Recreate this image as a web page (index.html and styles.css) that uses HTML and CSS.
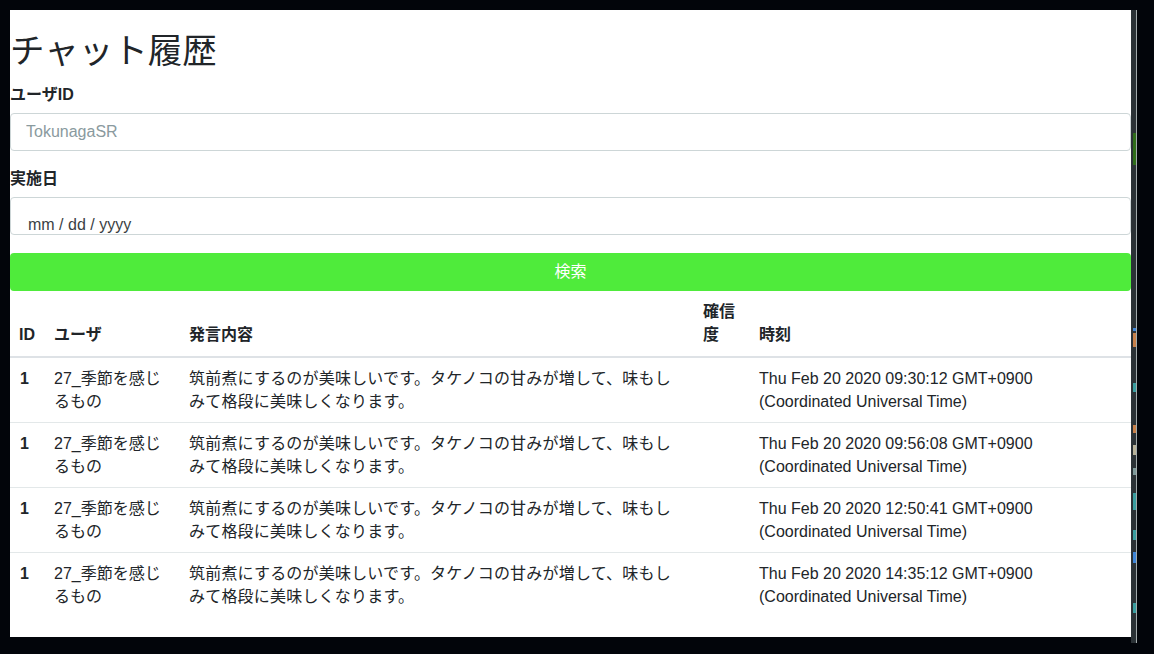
FILE: index.html
```html
<!DOCTYPE html>
<html lang="ja">
<head>
<meta charset="utf-8">
<title>チャット履歴</title>
<link rel="stylesheet" href="styles.css">
</head>
<body>
<div class="screen">
  <main class="page">
    <h1 class="title">チャット履歴</h1>
    <div class="field">
      <label class="label" for="uid">ユーザID</label>
      <input id="uid" class="input" type="text" placeholder="TokunagaSR">
    </div>
    <div class="field field-last">
      <label class="label">実施日</label>
      <div class="input date">mm / dd / yyyy</div>
    </div>
    <button class="search" type="button">検索</button>
    <table class="history">
      <colgroup>
        <col class="c-id"><col class="c-user"><col class="c-msg"><col class="c-conf"><col class="c-time">
      </colgroup>
      <thead>
        <tr><th>ID</th><th>ユーザ</th><th>発言内容</th><th>確信度</th><th>時刻</th></tr>
      </thead>
      <tbody>
        <tr><td class="id">1</td><td>27_季節を感じるもの</td><td class="msg">筑前煮にするのが美味しいです。タケノコの甘みが増して、味もしみて格段に美味しくなります。</td><td></td><td>Thu Feb 20 2020 09:30:12 GMT+0900 (Coordinated Universal Time)</td></tr>
        <tr><td class="id">1</td><td>27_季節を感じるもの</td><td class="msg">筑前煮にするのが美味しいです。タケノコの甘みが増して、味もしみて格段に美味しくなります。</td><td></td><td>Thu Feb 20 2020 09:56:08 GMT+0900 (Coordinated Universal Time)</td></tr>
        <tr><td class="id">1</td><td>27_季節を感じるもの</td><td class="msg">筑前煮にするのが美味しいです。タケノコの甘みが増して、味もしみて格段に美味しくなります。</td><td></td><td>Thu Feb 20 2020 12:50:41 GMT+0900 (Coordinated Universal Time)</td></tr>
        <tr><td class="id">1</td><td>27_季節を感じるもの</td><td class="msg">筑前煮にするのが美味しいです。タケノコの甘みが増して、味もしみて格段に美味しくなります。</td><td></td><td>Thu Feb 20 2020 14:35:12 GMT+0900 (Coordinated Universal Time)</td></tr>
      </tbody>
    </table>
  </main>
  <div class="strip">
    <span class="mark m-green"></span>
    <span class="mark m-blue m2"></span>
    <span class="mark m-orange m3"></span>
    <span class="mark m-teal m4"></span>
    <span class="mark m-orange m5"></span>
    <span class="mark m-beige m6"></span>
    <span class="mark m-gray m7"></span>
    <span class="mark m-teal m8"></span>
    <span class="mark m-teal m9"></span>
    <span class="mark m-blue m10"></span>
    <span class="mark m-teal m11"></span>
  </div>
</div>
</body>
</html>
```

FILE: styles.css
```css
html, body {
  margin: 0;
  padding: 0;
  background: #02050a;
}

.screen {
  display: flex;
  align-items: flex-start;
  box-sizing: border-box;
  height: 654px;
  padding: 10px 0 0 10px;
  font-family: "Liberation Sans", "Noto Sans CJK JP", sans-serif;
  color: #212529;
}

.page {
  width: 1121px;
  height: 627px;
  background: #ffffff;
  overflow: hidden;
}

.title {
  margin: 20px 0 10.5px;
  font-size: 34.5px;
  line-height: 42px;
  font-weight: 400;
  color: #212529;
}

.field {
  display: flex;
  flex-direction: column;
  margin-bottom: 16px;
}

.field-last {
  margin-bottom: 18.5px;
}

.label {
  font-size: 16px;
  line-height: 24px;
  font-weight: 700;
  margin-bottom: 6px;
}

.input {
  box-sizing: border-box;
  width: 100%;
  height: 38px;
  margin: 0;
  border: 1px solid #cdd6d7;
  border-radius: 4px;
  padding: 0 15px;
  font-family: inherit;
  font-size: 16px;
  color: #495057;
  background: #fff;
  outline: none;
}

.input::placeholder {
  color: #8a9a9e;
}

.date {
  padding: 15.5px 0 0 17px;
  line-height: 24px;
  color: #3a3f44;
  overflow: hidden;
  white-space: nowrap;
}

.search {
  display: block;
  box-sizing: border-box;
  width: 100%;
  height: 38px;
  margin: 0;
  border: none;
  border-radius: 4px;
  background: #4feb3b;
  color: #ffffff;
  font-family: inherit;
  font-size: 16px;
  line-height: 24px;
  cursor: pointer;
}

.history {
  width: 1121px;
  border-collapse: collapse;
  table-layout: fixed;
  font-size: 16px;
}

.c-id { width: 35px; }
.c-user { width: 135px; }
.c-msg { width: 514px; }
.c-conf { width: 56px; }
.c-time { width: 381px; }

.history th {
  text-align: left;
  vertical-align: bottom;
  font-weight: 700;
  line-height: 23.5px;
  padding: 8.5px 9px 9px;
  border-bottom: 2px solid #dee2e6;
}

.history td {
  vertical-align: top;
  line-height: 23px;
  padding: 9px;
  border-top: 1px solid #e3e8e9;
}

.history tbody tr:first-child td {
  border-top: none;
}

.history td.id {
  font-weight: 700;
  padding-left: 10px;
}

.history td.msg {
  padding-right: 12px;
  letter-spacing: 0.2px;
}

.strip {
  display: flex;
  flex-direction: column;
  align-items: flex-end;
  width: 5px;
  height: 633px;
  background: #2b3236;
  border-right: 1px solid #a2aaab;
}

.mark {
  display: block;
  width: 3px;
  flex: none;
}

.m-green { margin-top: 123px; height: 32px; background: #2f6e1a; }
.m-blue { background: #3f86d8; }
.m-orange { background: #c8814a; }
.m-teal { background: #3a9ea0; }
.m-beige { background: #b8b39a; }
.m-gray { background: #7f9a9a; }

.m2 { margin-top: 163px; height: 3px; }
.m3 { margin-top: 2px; height: 14px; }
.m4 { margin-top: 36px; height: 9px; }
.m5 { margin-top: 33px; height: 8px; }
.m6 { margin-top: 12px; height: 10px; }
.m7 { margin-top: 13px; height: 7px; }
.m8 { margin-top: 18px; height: 17px; }
.m9 { margin-top: 20px; height: 10px; }
.m10 { margin-top: 12px; height: 11px; }
.m11 { margin-top: 40px; height: 10px; }
```
